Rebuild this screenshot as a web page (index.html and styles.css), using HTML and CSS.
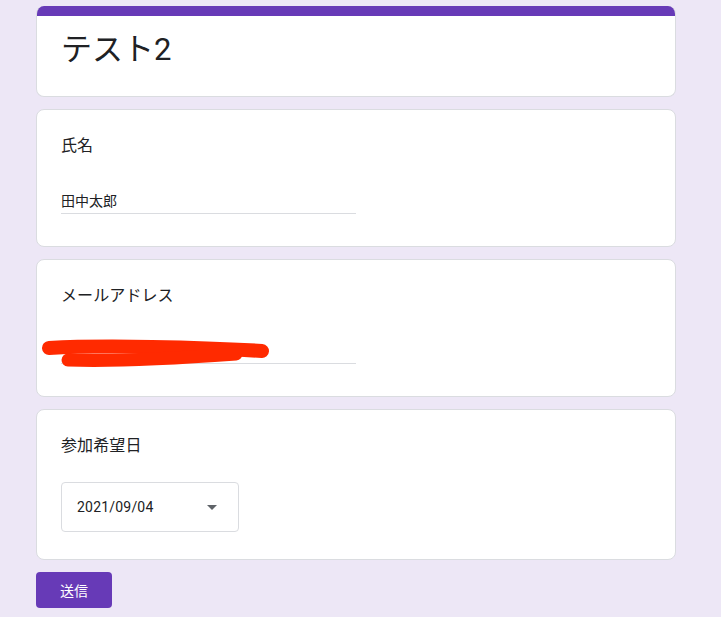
FILE: index.html
```html
<!DOCTYPE html>
<html lang="ja">
<head>
<meta charset="utf-8">
<title>テスト2</title>
<link rel="stylesheet" href="styles.css">
</head>
<body>
<div class="form">
  <div class="card header">
    <div class="band"></div>
    <h1 class="title">テスト2</h1>
  </div>
  <div class="card">
    <div class="label">氏名</div>
    <div class="field"><span class="value">田中太郎</span></div>
  </div>
  <div class="card redacted">
    <div class="label">メールアドレス</div>
    <div class="field"><span class="value">&nbsp;</span></div>
    <svg class="scribble" width="240" height="40" viewBox="36 335 240 40">
      <path d="M48 347 C 100 344, 200 346, 261 350" fill="none" stroke="#ff2a00" stroke-width="14" stroke-linecap="round"/>
      <path d="M67 359 C 120 361, 180 357, 235 353" fill="none" stroke="#ff2a00" stroke-width="13" stroke-linecap="round"/>
    </svg>
  </div>
  <div class="card">
    <div class="label">参加希望日</div>
    <div class="select">
      <span class="select-value">2021/09/04</span>
      <span class="arrow"></span>
    </div>
  </div>
  <div class="actions">
    <button class="submit">送信</button>
  </div>
</div>
</body>
</html>
```
FILE: styles.css
```css
html, body {
  margin: 0;
  padding: 0;
  background: #ede7f6;
  font-family: Roboto, "Noto Sans CJK JP", sans-serif;
  color: #202124;
}
.form {
  width: 640px;
  margin-left: 36px;
  padding-top: 6px;
  display: flex;
  flex-direction: column;
  gap: 12px;
}
.card {
  position: relative;
  background: #fff;
  border: 1px solid #dadce0;
  border-radius: 8px;
  padding: 24px 24px 24px 24px;
}
.card.header {
  padding: 0 24px 26px 24px;
  border-top: none;
  overflow: hidden;
}
.band {
  height: 10px;
  background: #673ab7;
  margin: 0 -25px 0 -25px;
}
.title {
  margin: 14px 0 0 0;
  font-size: 31px;
  line-height: 40px;
  font-weight: 400;
  color: #202124;
}
.label {
  font-size: 16px;
  line-height: 23px;
  padding-bottom: 1px;
  letter-spacing: 0.1px;
}
.field {
  width: 295px;
  margin-top: 31px;
  margin-bottom: 8px;
  border-bottom: 1px solid #dadce0;
  height: 24px;
}
.value {
  font-size: 14px;
  line-height: 24px;
}
.scribble {
  position: absolute;
  left: 0;
  top: 76px;
}
.select {
  margin-top: 24px;
  width: 178px;
  height: 50px;
  border: 1px solid #dadce0;
  border-radius: 4px;
  display: flex;
  align-items: center;
  justify-content: space-between;
  padding: 0 21px 0 15px;
  box-sizing: border-box;
  margin-bottom: 3px;
}
.select-value {
  font-size: 14px;
  letter-spacing: 0.2px;
}
.arrow {
  width: 0;
  height: 0;
  border-left: 5px solid transparent;
  border-right: 5px solid transparent;
  border-top: 5px solid #5f6368;
}
.actions {
  display: flex;
}
.submit {
  width: 76px;
  height: 36px;
  border: none;
  border-radius: 4px;
  background: #673ab7;
  color: #fff;
  font-family: Roboto, "Noto Sans CJK JP", sans-serif;
  font-size: 14px;
  padding: 0;
}
```
